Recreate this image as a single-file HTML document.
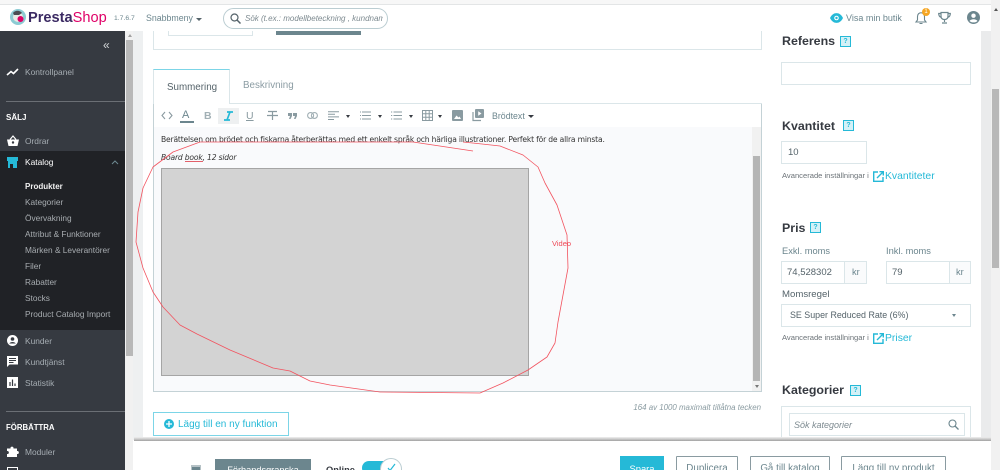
<!DOCTYPE html>
<html lang="sv"><head><meta charset="utf-8"><title>PrestaShop</title>
<style>
html,body{margin:0;padding:0;width:1000px;height:470px;overflow:hidden}
body{background:#fff;font-family:"Liberation Sans",sans-serif;color:#363a41}
#w{position:relative;width:1000px;height:470px;overflow:hidden}
.a{position:absolute;white-space:nowrap}
.box{position:absolute;box-sizing:border-box;background:#fff;border:1px solid #dbe6e9}
.n{font-size:8.4px;color:#a6adb3}
.s{font-size:8.3px;color:#a8adb1}
.h{font-size:12.4px;font-weight:bold;color:#363a41}
.q{position:absolute;box-sizing:border-box;width:11px;height:11px;border:1px solid #25b9d7;background:#d4f1f7;color:#25b9d7;font-size:7px;font-weight:bold;line-height:9px;text-align:center}
.l{font-size:9.3px;color:#6c868e}
.v{font-size:9.5px;color:#55636a}
.t{font-size:7.6px;color:#6c7378}
.lk{font-size:10.4px;color:#25b9d7}
.b{position:absolute;box-sizing:border-box;background:#fff;border:1px solid #8a9ba1;color:#6c868e;font-size:9.8px;text-align:center;padding-top:6px;height:24px;border-radius:1px}
svg{position:absolute;overflow:visible}
</style></head><body><div id="w">

<!-- page backgrounds -->
<div class="a" style="left:133px;top:31px;width:858px;height:439px;background:#fff"></div>
<div class="a" style="left:133px;top:31px;width:10px;height:409px;background:#eef0f1"></div>
<div class="a" style="left:981px;top:31px;width:10px;height:409px;background:#eaebec"></div>
<div class="a" style="left:991px;top:0;width:9px;height:470px;background:#f1f1f1"></div>
<div class="a" style="left:992px;top:89px;width:7px;height:179px;background:#b8b8b8"></div>
<div class="a" style="left:994px;top:8px;border:2px solid transparent;border-bottom:3px solid #555;border-top:0"></div>
<div class="a" style="left:125px;top:31px;width:8px;height:439px;background:#f1f1f1"></div>
<div class="a" style="left:126px;top:40px;width:7px;height:316px;background:#b8b8b8"></div>
<div class="a" style="left:128px;top:34px;border:2px solid transparent;border-bottom:3px solid #a0a0a0;border-top:0"></div>

<!-- sidebar -->
<div class="a" style="left:0;top:31px;width:125px;height:439px;background:#363a41"></div>
<div class="a" style="left:103px;top:38px;font-size:12px;color:#d5d8da;letter-spacing:-1px">«</div>
<svg style="left:7px;top:68px" width="12" height="9" viewBox="0 0 12 9"><path d="M0 7L4 3.500L6.500 5.500L11 1" fill="none" stroke="#fff" stroke-width="1.600"/></svg>
<div class="a n" style="left:25px;top:67px">Kontrollpanel</div>
<div class="a" style="left:6px;top:101px;width:119px;height:1px;background:#6b6f75"></div>
<div class="a" style="left:6px;top:113px;font-size:8px;font-weight:bold;color:#fff">SÄLJ</div>
<svg style="left:7px;top:135px" width="12" height="11" viewBox="0 0 12 11"><path d="M0 4.500H12L10.500 11H1.500Z" fill="#fff"/><path d="M3 4.500L6 1L9 4.500" fill="none" stroke="#fff" stroke-width="1.200"/><circle cx="6" cy="7.500" r="1.200" fill="#363a41"/></svg>
<div class="a n" style="left:25px;top:136px">Ordrar</div>

<div class="a" style="left:0;top:151px;width:125px;height:179px;background:#202226"></div>
<svg style="left:7px;top:157px" width="11" height="11" viewBox="0 0 11 11"><path d="M0 0H11V4H0ZM1 4H10V11H6V7H3V11H1Z" fill="#25b9d7"/></svg>
<div class="a" style="left:25px;top:157px;font-size:8.400px;color:#fff">Katalog</div>
<svg style="left:111px;top:160px" width="8" height="5" viewBox="0 0 8 5"><path d="M1 4L4 1L7 4" fill="none" stroke="#6e8a92" stroke-width="1"/></svg>
<div class="a" style="left:25px;top:182px;font-size:8px;font-weight:bold;color:#f0f0f0">Produkter</div>
<div class="a s" style="left:25px;top:197px">Kategorier</div>
<div class="a s" style="left:25px;top:213px">Övervakning</div>
<div class="a s" style="left:25px;top:229px">Attribut &amp; Funktioner</div>
<div class="a s" style="left:25px;top:245px">Märken &amp; Leverantörer</div>
<div class="a s" style="left:25px;top:261px">Filer</div>
<div class="a s" style="left:25px;top:277px">Rabatter</div>
<div class="a s" style="left:25px;top:293px">Stocks</div>
<div class="a s" style="left:25px;top:309px">Product Catalog Import</div>

<svg style="left:7px;top:335px" width="11" height="11" viewBox="0 0 11 11"><circle cx="5.500" cy="5.500" r="5.500" fill="#fff"/><circle cx="5.500" cy="4" r="1.800" fill="#363a41"/><path d="M2.200 8.500C3.500 6.500 7.500 6.500 8.800 8.500Z" fill="#363a41"/></svg>
<div class="a n" style="left:25px;top:336px">Kunder</div>
<svg style="left:7px;top:356px" width="11" height="11" viewBox="0 0 11 11"><path d="M0 0H11V8.500H2.500L0 11Z" fill="#fff"/><path d="M2 2.500H9M2 4.500H9M2 6.500H6.500" stroke="#363a41" stroke-width=".9"/></svg>
<div class="a n" style="left:25px;top:357px">Kundtjänst</div>
<svg style="left:7px;top:377px" width="11" height="11" viewBox="0 0 11 11"><rect width="11" height="11" fill="#fff"/><path d="M3 9V5M5.500 9V2.500M8 9V6.500" stroke="#363a41" stroke-width="1.200"/></svg>
<div class="a n" style="left:25px;top:378px">Statistik</div>
<div class="a" style="left:6px;top:411px;width:119px;height:1px;background:#6b6f75"></div>
<div class="a" style="left:6px;top:423px;font-size:7.800px;font-weight:bold;color:#fff">FÖRBÄTTRA</div>
<svg style="left:7px;top:446px" width="12" height="11" viewBox="0 0 12 11"><path d="M0 2.500H3.500C3 0 7 0 6.500 2.500H10V5C12.500 4.500 12.500 8.500 10 8V11H0V8C2.500 8.500 2.500 4.500 0 5Z" fill="#fff"/></svg>
<div class="a n" style="left:25px;top:447px">Moduler</div>
<div class="a" style="left:7px;top:467px;width:11px;height:3px;box-sizing:border-box;border:1px solid #fff;border-bottom:0"></div>

<!-- top strip + header -->
<div class="a" style="left:0;top:0;width:991px;height:4px;background:#f7f7f7"></div>
<div class="a" style="left:0;top:4px;width:991px;height:1px;background:#e3e5e6"></div>
<div class="a" style="left:0;top:5px;width:991px;height:26px;background:#fff"></div>
<svg style="left:10px;top:9px" width="16" height="16" viewBox="0 0 16 16"><circle cx="8" cy="8" r="8" fill="#8ccbd3"/><circle cx="8" cy="8" r="5" fill="#e9e9e4"/><path d="M3 4C5 1 10 1 12 4L9 6L4 6Z" fill="#4b4c52"/><circle cx="10.500" cy="10" r="3" fill="#df0067"/></svg>
<div class="a" style="left:28px;top:10px;font-size:14.600px;font-weight:bold;color:#3b2a63">Presta<span style="color:#df0067;font-weight:normal">Shop</span></div>
<div class="a" style="left:114px;top:15px;font-size:6.800px;color:#6c868e">1.7.6.7</div>
<div class="a" style="left:146px;top:13px;font-size:8.800px;color:#6c868e">Snabbmeny</div>
<div class="a" style="left:196px;top:18px;border:3px solid transparent;border-top:3px solid #55636a;border-bottom:0"></div>
<div class="a" style="left:223px;top:8px;width:165px;height:21px;box-sizing:border-box;border:1px solid #bbcdd2;border-radius:11px;background:#fff"></div>
<svg style="left:230px;top:13px" width="11" height="11" viewBox="0 0 11 11"><circle cx="4.500" cy="4.500" r="3.500" fill="none" stroke="#55636a" stroke-width="1.200"/><path d="M7 7L10.500 10.500" stroke="#55636a" stroke-width="1.500"/></svg>
<div class="a" style="left:245px;top:14px;width:138px;overflow:hidden;font-size:8px;font-style:italic;color:#7d8a90">Sök (t.ex.: modellbeteckning , kundnamn</div>
<svg style="left:830px;top:13px" width="13" height="10" viewBox="0 0 13 10"><path d="M0 5C3 -1.500 10 -1.500 13 5C10 11.500 3 11.500 0 5Z" fill="#25b9d7"/><circle cx="6.500" cy="5" r="2.300" fill="#fff"/><circle cx="6.500" cy="5" r="1.200" fill="#25b9d7"/></svg>
<div class="a" style="left:846px;top:13px;font-size:9px;color:#6c868e">Visa min butik</div>
<svg style="left:915px;top:11px" width="12" height="14" viewBox="0 0 12 14"><path d="M1 11H11L9.500 9V5.500C9.500 0.500 2.500 0.500 2.500 5.500V9Z M4.500 12.500H7.500" fill="none" stroke="#6c868e" stroke-width="1.100"/></svg>
<div class="a" style="left:922px;top:8px;width:8px;height:8px;border-radius:50%;background:#f5a623;color:#fff;font-size:6px;line-height:8px;text-align:center">1</div>
<svg style="left:938px;top:12px" width="13" height="12" viewBox="0 0 13 12"><path d="M3 0.500H10V4C10 7 8 7.500 6.500 7.500C5 7.500 3 7 3 4ZM3 1.500H0.700C0.700 4 1.500 5 3.500 5.500M10 1.500H12.300C12.300 4 11.500 5 9.500 5.500M6.500 7.500V10M4 11H9" fill="none" stroke="#6c868e" stroke-width="1.200"/></svg>
<svg style="left:967px;top:11px" width="13" height="13" viewBox="0 0 13 13"><circle cx="6.500" cy="6.500" r="6.500" fill="#6c868e"/><circle cx="6.500" cy="4.700" r="2.200" fill="#fff"/><path d="M2.500 10C3.800 7.600 9.200 7.600 10.500 10C8.500 11.900 4.500 11.900 2.500 10Z" fill="#fff"/></svg>

<!-- upper card remnant -->
<div class="a" style="left:153px;top:31px;width:609px;height:19px;box-sizing:border-box;border:1px solid #dbe6e9;border-top:0"></div>
<div class="a" style="left:168px;top:31px;width:85px;height:5px;box-sizing:border-box;border:1px solid #dbe6e9;border-top:0"></div>
<div class="a" style="left:276px;top:31px;width:85px;height:4px;background:#6c868e"></div>

<!-- tabs -->
<div class="a" style="left:153px;top:103px;width:609px;height:1px;background:#dbe6e9"></div>
<div class="a" style="left:153px;top:69px;width:77px;height:35px;box-sizing:border-box;border:1px solid #dbe6e9;border-top:1px solid #7cd5e7;border-bottom:0;background:#fff"></div>
<div class="a" style="left:167px;top:82px;font-size:9.800px;color:#55636a">Summering</div>
<div class="a" style="left:243px;top:80px;font-size:9.800px;color:#8b9ca3">Beskrivning</div>

<!-- editor -->
<div class="a" style="left:153px;top:104px;width:609px;height:288px;box-sizing:border-box;border:1px solid #c4d2d6;border-top:0;background:#fff"></div>
<div class="a" style="left:154px;top:127px;width:607px;height:264px;background:#f9fafc"></div>
<div class="a" style="left:218px;top:108px;width:21px;height:16px;background:#eef0f1"></div>

<svg style="left:161px;top:111px" width="12" height="9" viewBox="0 0 12 9"><path d="M4 1L1 4.500L4 8M8 1L11 4.500L8 8" fill="none" stroke="#8a9aa0" stroke-width="1.100"/></svg>
<div class="a" style="left:182px;top:109px;font-size:11px;color:#6c868e">A</div>
<div class="a" style="left:180px;top:121px;width:14px;height:2px;background:#6c868e"></div>
<div class="a" style="left:204px;top:110px;font-size:10.500px;font-weight:bold;color:#a2b0b5">B</div>
<svg style="left:224px;top:111px" width="9" height="10" viewBox="0 0 9 10"><path d="M3 1H9M0 9H6M6 1L3 9" fill="none" stroke="#25b9d7" stroke-width="1.700"/></svg>
<div class="a" style="left:246px;top:110px;font-size:10.500px;color:#8a9ba1;text-decoration:underline">U</div>
<svg style="left:267px;top:110px" width="11" height="11" viewBox="0 0 11 11"><path d="M1 1.500H10M5.500 1.500V10M0 5.500H11" stroke="#8a9ba1" stroke-width="1.200" fill="none"/></svg>
<svg style="left:288px;top:113px" width="9" height="6" viewBox="0 0 9 6"><path d="M0 0H4V3L2.500 6H1L2 3H0ZM5 0H9V3L7.500 6H6L7 3H5Z" fill="#8a9ba1"/></svg>
<svg style="left:307px;top:112px" width="11" height="7" viewBox="0 0 11 7"><rect x=".6" y=".6" width="6" height="5.800" rx="2.900" fill="none" stroke="#a2b0b5" stroke-width="1.100"/><rect x="4.400" y=".6" width="6" height="5.800" rx="2.900" fill="none" stroke="#a2b0b5" stroke-width="1.100"/></svg>
<svg style="left:328px;top:111px" width="11" height="10" viewBox="0 0 11 10"><path d="M0 .7H11M0 3.300H7M0 5.900H11M0 8.500H6" stroke="#8a9ba1" stroke-width="1"/></svg>
<div class="a" style="left:346px;top:115px;border:2.500px solid transparent;border-top:3px solid #363a41;border-bottom:0"></div>
<svg style="left:360px;top:111px" width="11" height="10" viewBox="0 0 11 10"><path d="M2 1H11M2 4.500H11M2 8H11M0 1H1M0 4.500H1M0 8H1" stroke="#8a9ba1" stroke-width="1"/></svg>
<div class="a" style="left:378px;top:115px;border:2.500px solid transparent;border-top:3px solid #363a41;border-bottom:0"></div>
<svg style="left:391px;top:111px" width="11" height="10" viewBox="0 0 11 10"><path d="M2.500 1H11M2.500 4.500H11M2.500 8H11M0 1H1.200M0 4.500H1.200M0 8H1.200" stroke="#8a9ba1" stroke-width="1"/></svg>
<div class="a" style="left:409px;top:115px;border:2.500px solid transparent;border-top:3px solid #363a41;border-bottom:0"></div>
<svg style="left:422px;top:110px" width="11" height="11" viewBox="0 0 11 11"><rect x=".5" y=".5" width="10" height="10" fill="none" stroke="#8a9ba1"/><path d="M3.800 0V11M7.200 0V11M0 3.800H11M0 7.200H11" stroke="#8a9ba1"/></svg>
<div class="a" style="left:438px;top:115px;border:2.500px solid transparent;border-top:3px solid #363a41;border-bottom:0"></div>
<svg style="left:452px;top:110px" width="11" height="11" viewBox="0 0 11 11"><rect width="11" height="11" rx="1" fill="#8a9ba1"/><path d="M2 9L4.500 5.500L6.500 7.500L7.500 6.500L9 9Z" fill="#fff"/></svg>
<svg style="left:472px;top:109px" width="12" height="12" viewBox="0 0 12 12"><rect x="3" y="0" width="9" height="9" rx="1" fill="#8a9ba1"/><path d="M6.200 2.200L9.500 4.500L6.200 6.800Z" fill="#fff"/><path d="M1 3V11.500H9" fill="none" stroke="#8a9ba1" stroke-width="1.200"/></svg>
<div class="a" style="left:492px;top:111px;font-size:8.800px;color:#6c868e">Brödtext</div>
<div class="a" style="left:528px;top:115px;border:3px solid transparent;border-top:3px solid #363a41;border-bottom:0"></div>

<div class="a" style="left:161px;top:135px;font-family:'DejaVu Sans',sans-serif;font-size:7.600px;letter-spacing:-.18px;color:#333">Berättelsen om brödet och fiskarna återberättas med ett enkelt språk och härliga illustrationer. Perfekt för de allra minsta.</div>
<div class="a" style="left:161px;top:153px;font-family:'DejaVu Sans',sans-serif;font-size:7.600px;letter-spacing:-.18px;font-style:italic;color:#333">Board book, 12 sidor</div>
<div class="a" style="left:185px;top:161px;width:18px;height:1px;background:#e2606a"></div>
<div class="a" style="left:161px;top:168px;width:368px;height:208px;box-sizing:border-box;background:#d3d3d3;border:1px solid #a5a5a5"></div>

<!-- editor scrollbar -->
<div class="a" style="left:752px;top:127px;width:9px;height:264px;background:#f1f1f1"></div>
<div class="a" style="left:753px;top:156px;width:7px;height:225px;background:#b5b5b5"></div>
<div class="a" style="left:755px;top:385px;border:2px solid transparent;border-top:3px solid #777;border-bottom:0"></div>

<!-- red circle -->
<svg style="left:0;top:0" width="1000" height="470" viewBox="0 0 1000 470"><polyline points="473,151 413,142 330,142 200,142 173,152 153,167 143,188 138,212 136,242 143,268 153,292 163,307 180,325 197,334 230,350 273,368 290,371 310,381 330,385 380,392 480,393 503,383 528,370 547,357 555,343 558,322 563,295 568,268 567,235 557,205 545,183 538,167 523,155 500,146 482,144 463,142" fill="none" stroke="#f2535f" stroke-width=".8" stroke-linejoin="round"/></svg>
<div class="a" style="left:552px;top:239px;font-size:7.500px;color:#ee4a57">Video</div>

<div class="a" style="left:0;top:403px;width:761px;text-align:right;font-size:7.900px;font-style:italic;color:#8a9ba1">164 av 1000 maximalt tillåtna tecken</div>

<!-- add feature -->
<div class="a" style="left:153px;top:412px;width:136px;height:24px;box-sizing:border-box;border:1px solid #7cd5e7;background:#fff"></div>
<svg style="left:164px;top:419px" width="10" height="10" viewBox="0 0 10 10"><circle cx="5" cy="5" r="5" fill="#25b9d7"/><path d="M5 2V8M2 5H8" stroke="#fff" stroke-width="1.300"/></svg>
<div class="a" style="left:178px;top:419px;font-size:10px;color:#25b9d7">Lägg till en ny funktion</div>

<!-- right column -->
<div class="a h" style="left:782px;top:34px">Referens</div><div class="q" style="left:840px;top:36px">?</div>
<div class="box" style="left:781px;top:62px;width:190px;height:23px"></div>

<div class="a h" style="left:782px;top:119px">Kvantitet</div><div class="q" style="left:843px;top:120px">?</div>
<div class="box" style="left:781px;top:141px;width:86px;height:23px"></div>
<div class="a v" style="left:788px;top:147px">10</div>
<div class="a t" style="left:782px;top:171px">Avancerade inställningar i</div>
<svg style="left:873px;top:171px" width="11" height="11" viewBox="0 0 11 11"><path d="M5 1H.7V10.300H10V6M4 7L10 1M6.500 .7H10.300V4.500" fill="none" stroke="#25b9d7" stroke-width="1.400"/></svg>
<div class="a lk" style="left:885px;top:171px">Kvantiteter</div>

<div class="a h" style="left:782px;top:221px">Pris</div><div class="q" style="left:810px;top:222px">?</div>
<div class="a l" style="left:782px;top:246px">Exkl. moms</div>
<div class="a l" style="left:886px;top:246px">Inkl. moms</div>
<div class="box" style="left:781px;top:261px;width:86px;height:23px"></div>
<div class="a" style="left:844px;top:262px;width:21px;height:21px;background:#fafbfc;border-left:1px solid #dbe6e9"></div>
<div class="a v" style="left:787px;top:267px">74,528302</div>
<div class="a l" style="left:852px;top:267px">kr</div>
<div class="box" style="left:886px;top:261px;width:85px;height:23px"></div>
<div class="a" style="left:949px;top:262px;width:20px;height:21px;background:#fafbfc;border-left:1px solid #dbe6e9"></div>
<div class="a v" style="left:892px;top:267px">79</div>
<div class="a l" style="left:956px;top:267px">kr</div>
<div class="a l" style="left:782px;top:289px;color:#55636a;font-size:9.600px">Momsregel</div>
<div class="box" style="left:781px;top:304px;width:190px;height:23px"></div>
<div class="a v" style="left:790px;top:310px;font-size:8.900px">SE Super Reduced Rate (6%)</div>
<div class="a" style="left:952px;top:314px;border:2.500px solid transparent;border-top:3px solid #6c868e;border-bottom:0"></div>
<div class="a t" style="left:782px;top:333px">Avancerade inställningar i</div>
<svg style="left:873px;top:333px" width="11" height="11" viewBox="0 0 11 11"><path d="M5 1H.7V10.300H10V6M4 7L10 1M6.500 .7H10.300V4.500" fill="none" stroke="#25b9d7" stroke-width="1.400"/></svg>
<div class="a lk" style="left:885px;top:333px">Priser</div>

<div class="a h" style="left:782px;top:383px">Kategorier</div><div class="q" style="left:850px;top:385px">?</div>
<div class="box" style="left:781px;top:406px;width:190px;height:40px"></div>
<div class="box" style="left:789px;top:413px;width:176px;height:23px"></div>
<div class="a" style="left:794px;top:420px;font-size:9px;font-style:italic;color:#7d8a90">Sök kategorier</div>
<svg style="left:948px;top:419px" width="11" height="11" viewBox="0 0 11 11"><circle cx="4.500" cy="4.500" r="3.500" fill="none" stroke="#6c868e" stroke-width="1.100"/><path d="M7 7L10.500 10.500" stroke="#6c868e" stroke-width="1.300"/></svg>

<!-- footer -->
<div class="a" style="left:134px;top:437px;width:857px;height:4px;background:linear-gradient(#f0f0f0,#c4c4c4 60%,#a0a0a0)"></div>
<div class="a" style="left:134px;top:441px;width:857px;height:29px;background:#fff"></div>
<svg style="left:191px;top:465px" width="10" height="5" viewBox="0 0 10 5"><path d="M0 1H10M1 2.500H9V5H1Z" fill="#6c868e" stroke="#6c868e"/></svg>
<div class="a" style="left:215px;top:459px;width:96px;height:11px;background:#6c868e;color:#fff;font-size:9.200px;text-align:center;padding-top:6px;box-sizing:border-box;overflow:hidden">Förhandsgranska</div>
<div class="a" style="left:326px;top:465px;font-size:9.300px;font-weight:bold;color:#363a41">Online</div>
<div class="a" style="left:362px;top:461px;width:36px;height:14px;border-radius:7px;background:#25b9d7"></div>
<div class="a" style="left:380px;top:458px;width:22px;height:22px;box-sizing:border-box;border-radius:50%;background:#fff;border:1px solid #bbcdd2"></div>
<svg style="left:387px;top:463px" width="9" height="8" viewBox="0 0 9 8"><path d="M1 5L3 7.500L8 1" fill="none" stroke="#25b9d7" stroke-width="1.200"/></svg>
<div class="a" style="left:620px;top:456px;width:44px;height:14px;background:#25b9d7;color:#fff;font-size:9.400px;text-align:center;padding-top:7px;box-sizing:border-box;overflow:hidden">Spara</div>
<div class="b" style="left:676px;top:456px;width:62px">Duplicera</div>
<div class="b" style="left:750px;top:456px;width:80px">Gå till katalog</div>
<div class="b" style="left:841px;top:456px;width:105px">Lägg till ny produkt</div>
</div></body></html>
